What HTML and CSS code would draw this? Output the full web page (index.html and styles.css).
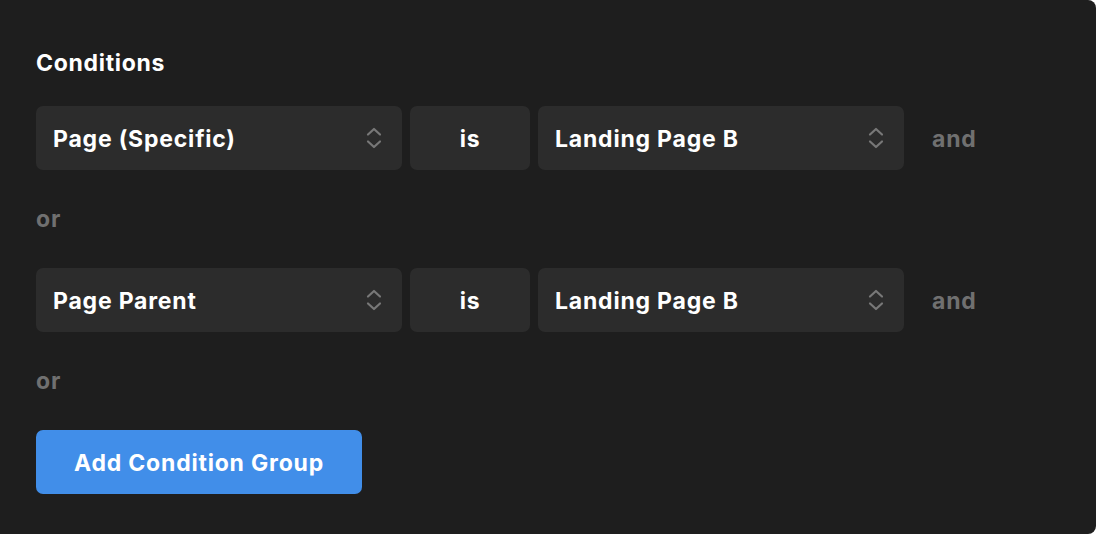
FILE: index.html
```html
<!DOCTYPE html>
<html>
<head>
<meta charset="utf-8">
<link rel="stylesheet" href="styles.css">
</head>
<body>
<div class="panel">
  <h2 class="title">Conditions</h2>
  <div class="row">
    <div class="select wide"><span>Page (Specific)</span>
      <svg class="chev" width="16" height="24" viewBox="0 0 16 24"><path d="M2 8.5 L8 3 L14 8.5 M2 15.5 L8 21 L14 15.5" fill="none" stroke="#787878" stroke-width="2.2" stroke-linecap="round" stroke-linejoin="round"/></svg>
    </div>
    <div class="select op">is</div>
    <div class="select wide"><span>Landing Page B</span>
      <svg class="chev" width="16" height="24" viewBox="0 0 16 24"><path d="M2 8.5 L8 3 L14 8.5 M2 15.5 L8 21 L14 15.5" fill="none" stroke="#787878" stroke-width="2.2" stroke-linecap="round" stroke-linejoin="round"/></svg>
    </div>
    <span class="join">and</span>
  </div>
  <div class="or">or</div>
  <div class="row">
    <div class="select wide"><span>Page Parent</span>
      <svg class="chev" width="16" height="24" viewBox="0 0 16 24"><path d="M2 8.5 L8 3 L14 8.5 M2 15.5 L8 21 L14 15.5" fill="none" stroke="#787878" stroke-width="2.2" stroke-linecap="round" stroke-linejoin="round"/></svg>
    </div>
    <div class="select op">is</div>
    <div class="select wide"><span>Landing Page B</span>
      <svg class="chev" width="16" height="24" viewBox="0 0 16 24"><path d="M2 8.5 L8 3 L14 8.5 M2 15.5 L8 21 L14 15.5" fill="none" stroke="#787878" stroke-width="2.2" stroke-linecap="round" stroke-linejoin="round"/></svg>
    </div>
    <span class="join">and</span>
  </div>
  <div class="or">or</div>
  <button class="add">Add Condition Group</button>
</div>
</body>
</html>
```
FILE: styles.css
```css
html, body {
  margin: 0;
  padding: 0;
  background: #ffffff;
}
body {
  font-family: Inter, "Noto Sans", sans-serif;
  -webkit-font-smoothing: antialiased;
}
.panel {
  width: 1096px;
  height: 534px;
  box-sizing: border-box;
  background: #1e1e1e;
  border-radius: 0 8px 8px 0;
  padding: 48px 36px 0 36px;
  display: flex;
  flex-direction: column;
}
.title {
  margin: 0;
  color: #ffffff;
  font-size: 23px;
  font-weight: 700;
  letter-spacing: 0.7px;
  line-height: 30px;
  height: 30px;
}
.row {
  display: flex;
  align-items: center;
  gap: 8px;
  margin-top: 28px;
}
.select {
  height: 64px;
  box-sizing: border-box;
  background: #2c2c2c;
  border-radius: 7px;
  color: #ffffff;
  font-size: 23px;
  font-weight: 700;
  letter-spacing: 0.8px;
  display: flex;
  align-items: center;
}
.select span {
  padding-top: 2px;
}
.wide {
  width: 366px;
  padding: 0 20px 0 17px;
  justify-content: space-between;
}
.op {
  width: 120px;
  justify-content: center;
  padding-top: 2px;
}
.join {
  color: #707070;
  font-size: 23px;
  font-weight: 700;
  letter-spacing: 0.8px;
  margin-left: 20px;
  padding-top: 2px;
}
.or {
  color: #707070;
  font-size: 23px;
  font-weight: 700;
  letter-spacing: 0.8px;
  line-height: 30px;
  margin-top: 34px;
  margin-bottom: 6px;
}
.add {
  margin-top: 28px;
  width: 326px;
  height: 64px;
  border: none;
  border-radius: 7px;
  background: #418ee9;
  color: #ffffff;
  font-family: Inter, "Noto Sans", sans-serif;
  font-size: 23px;
  font-weight: 700;
  letter-spacing: 0.8px;
  padding: 2px 0 0 0;
}
```
